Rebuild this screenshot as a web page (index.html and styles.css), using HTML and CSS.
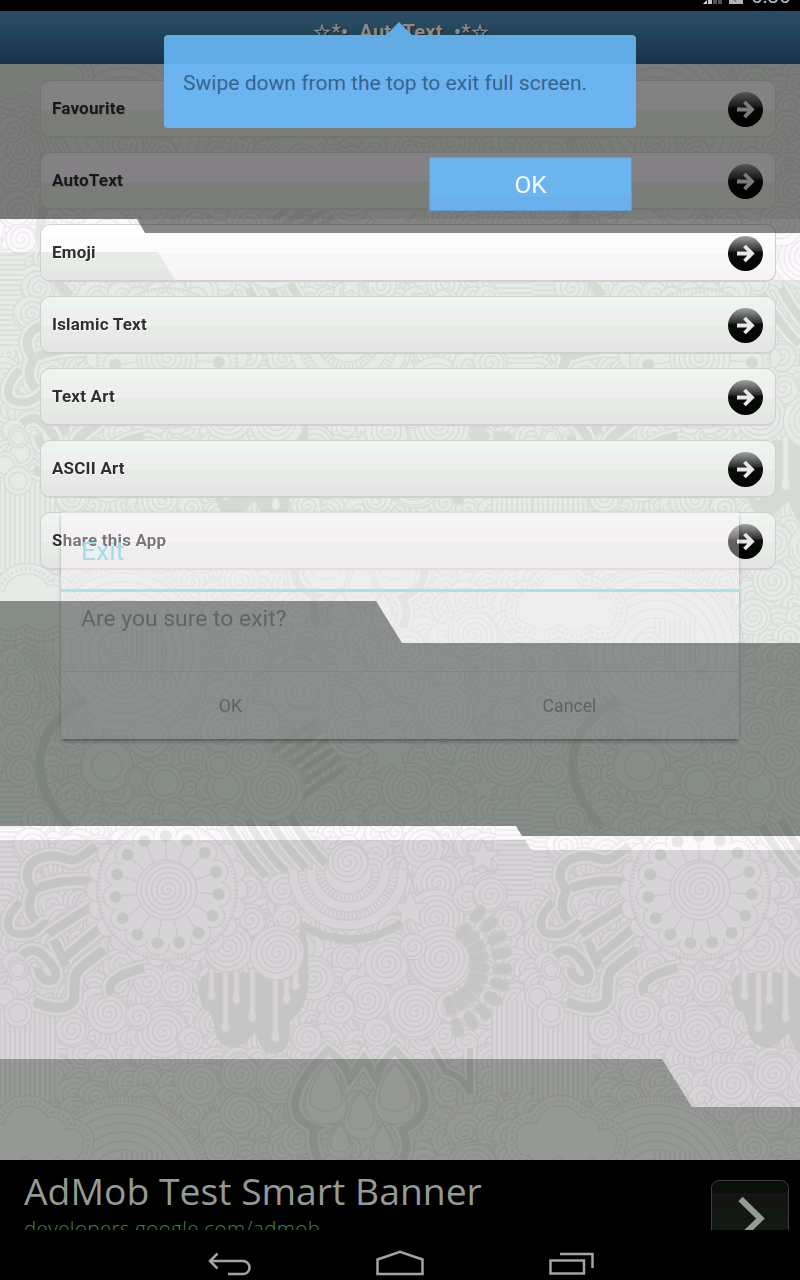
FILE: index.html
```
<!DOCTYPE html>
<html lang="en">
<head>
<meta charset="utf-8">
<title>AutoText</title>
<link rel="stylesheet" href="styles.css">
</head>
<body>
<div class="screen">
  <svg class="wallpaper" viewBox="0 0 800 1280" aria-hidden="true">
    <rect class="tone-mint" width="800" height="1280"/>
    <path class="tone-flash" d="M0 219H800V280H175L158 252H0Z"/>
    <path class="tone-flash" d="M0 826H516L522 836H800V850H531L525 840H0Z"/>
    <path class="tone-lilac" d="M0 840H525L531 850H800V1107H692L662 1059H0Z"/>
    <path class="tone-ash" d="M0 1059H662L692 1107H800V1160H0Z"/>
    <g class="doodles" id="doodles"></g>
  </svg>

  <div class="statusbar">
    <svg class="signal" viewBox="0 0 20 11"><path d="M1 4L5 0V4Z" fill="#ddd"/><path d="M6 0h4v4H6z" fill="#c8c8c8"/><path d="M11 0h4v4h-4zM16 0h4v4h-4z" fill="#555"/></svg>
    <svg class="battery" viewBox="0 0 14 11"><path d="M0 0h14v4H0z" fill="#b5b5b5"/><path d="M5 0l2 1.5" stroke="#555"/></svg>
    <span class="clock">6:36</span>
  </div>
  <header class="titlebar">☆*•. AutoText .•*☆</header>

  <main class="menu">
    <div class="row row-shaded"><span>Favourite</span><svg class="go"><use href="#go"/></svg></div>
    <div class="row row-shaded"><span>AutoText</span><svg class="go"><use href="#go"/></svg></div>
    <div class="row row-flash"><span>Emoji</span><svg class="go"><use href="#go"/></svg></div>
    <div class="row"><span>Islamic Text</span><svg class="go"><use href="#go"/></svg></div>
    <div class="row"><span>Text Art</span><svg class="go"><use href="#go"/></svg></div>
    <div class="row"><span>ASCII Art</span><svg class="go"><use href="#go"/></svg></div>
    <div class="row"><span>Share this App</span><svg class="go"><use href="#go"/></svg></div>
  </main>

  <footer class="bottom">
    <div class="ad">
      <div class="ad-copy"><div class="ad-title">AdMob Test Smart Banner</div><div class="ad-url">developers.google.com/admob</div></div>
      <div class="ad-button"><svg viewBox="0 0 78 60"><path d="M29.500 19L49.500 38.500L29.500 58" fill="none" stroke="#949a94" stroke-width="6"/></svg></div>
    </div>
    <nav class="navbar">
      <svg viewBox="0 0 44 28"><path d="M9.500 3.500L2 11l7.500 7.500M2.500 11H35a6.500 6.500 0 0 1 0 13H20" /></svg>
      <svg class="home" viewBox="0 0 48 28"><path d="M1.500 9.500L24 1.800L46.500 9.500V24H1.500Z"/></svg>
      <svg class="recent" viewBox="0 0 46 28"><path d="M1.500 10.500H35V23.500H1.500ZM11 4H43.500V18"/></svg>
    </nav>
  </footer>

  <section class="dialog">
    <h2>Exit</h2>
    <p>Are you sure to exit?</p>
    <div class="dialog-actions"><span>OK</span><span>Cancel</span></div>
  </section>

  <svg class="shade" viewBox="0 0 800 1280" aria-hidden="true">
    <path fill-opacity=".47" d="M0 64H800V233H145L137 219H0Z"/>
    <path fill="#000a02" fill-opacity=".415" d="M0 601H376L402 643H800V836H522L516 826H0Z"/>
  </svg>

  <div class="hint">Swipe down from the top to exit full screen.</div>
  <div class="hint-ok">OK</div>
</div>

<svg class="defs" aria-hidden="true">
  <defs>
    <linearGradient id="gloss" x1="0" y1="0" x2="0" y2="1">
      <stop offset="0" stop-color="#a2a4a2"/><stop offset=".42" stop-color="#2b2e2b"/><stop offset=".46" stop-color="#0b0e0b"/><stop offset="1" stop-color="#000"/>
    </linearGradient>
    <symbol id="go" viewBox="0 0 35 35">
      <circle cx="17.500" cy="17.500" r="17.500" fill="url(#gloss)"/>
      <path d="M9 17.500H23M16.500 10L24 17.500L16.500 25" fill="none" stroke="#e8e8e8" stroke-width="3.800"/>
    </symbol>
  </defs>
</svg>
<script src="doodles.js"></script>
</body>
</html>
```
FILE: styles.css
```
* { box-sizing: border-box; }
body { margin: 0; background: #000; font-family: Roboto, "Liberation Sans", sans-serif; }
.screen { position: relative; width: 800px; height: 1280px; overflow: hidden; display: flex; flex-direction: column; isolation: isolate; }
.defs { position: absolute; width: 0; height: 0; }
.wallpaper, .shade { position: absolute; inset: 0; width: 800px; height: 1280px; }
.wallpaper { z-index: -1; }
.doodles { mix-blend-mode: multiply; }
.tone-mint { fill: #e7ebe7; }
.tone-flash { fill: #fbf9fb; }
.tone-lilac { fill: #d7d4d7; }
.tone-ash { fill: #959894; }

.statusbar { height: 11px; background: #000; overflow: hidden; display: flex; justify-content: flex-end; padding-right: 8px; }
.signal { width: 20px; height: 11px; margin-right: 7px; }
.battery { width: 14px; height: 11px; margin-right: 8px; }
.clock { color: #bdbdbd; font-size: 20.5px; line-height: 20px; margin-top: -14px; width: 41px; }
.titlebar { height: 53px; padding-top: 9px; text-align: center; font-size: 20px; letter-spacing: .22px; line-height: 24px; font-weight: 700; color: #8c898c; text-shadow: 1px 1px 1px #222; background: linear-gradient(#294b68, #29495f 25%, #1d4558 40%, #213c57 65%, #18364e 90%, #143249); padding-left: 2px; }

.menu { flex: 1; display: flex; flex-direction: column; gap: 14px; padding: 16px 24px 0 40px; }
.row { height: 58px; flex: none; display: flex; align-items: center; justify-content: space-between; padding: 0 12px 1px 11px; border: 1px solid #ced2cd; border-bottom: 2px solid #ced1cd; border-radius: 10px; font-size: 17px; letter-spacing: .2px; font-weight: 700; color: #2f2f2f; text-shadow: 1px 1px 1px #fff; background: linear-gradient(#eef4ef 24%, #efefef 24% 52%, #e6ebe6 52% 80%, #e6e6e6 80%); }
.row-shaded { text-shadow: 1px 1px 1px #ccc; border-color: #d8dbd6; background: linear-gradient(#f9f4f9 52%, #e8ede4 52%); }
.row-flash { position: relative; background: linear-gradient(#fff 24%, #fefbff 24% 50%, #f7f7f7 50% 80%, #f7f3f7 80%); }
.row-flash::before { content: ""; position: absolute; left: 0; top: 27px; width: 134px; height: 28px; border-radius: 0 0 0 9px; background: linear-gradient(#e6ebe6 65%, #e6e6e6 65%); clip-path: polygon(0 0, 117px 0, 134px 100%, 0 100%); }
.row span { position: relative; }
.go { width: 35px; height: 35px; position: relative; top: 1px; }

.bottom { height: 120px; background: #000; }
.ad { height: 70px; overflow: hidden; display: flex; justify-content: space-between; padding: 0 11px 0 24px; }
.ad-copy { font-family: "Open Sans", "Noto Sans", sans-serif; white-space: nowrap; }
.ad-title { font-size: 37.3px; line-height: 50px; padding-top: 6px; color: #949a94; }
.ad-url { font-size: 20.5px; letter-spacing: .42px; line-height: 24px; font-weight: 300; color: #3f8743; }
.ad-button { width: 78px; height: 80px; margin-top: 20px; border: 1px solid #3a3d3a; border-radius: 8px; background: linear-gradient(#081008 16%, #131413 16% 27%, #101810 40%, #181c18); }
.ad-button svg { display: block; width: 78px; height: 60px; margin: -1px; }
.navbar { height: 50px; display: flex; padding: 20px 0 0 208px; }
.navbar svg { width: 44px; height: 28px; fill: none; stroke: #a3a3a3; stroke-width: 2.500; }
.navbar .home { width: 48px; margin-left: 124px; }
.navbar .recent { width: 46px; margin-left: 125px; }

.dialog { position: absolute; left: 61px; top: 512px; width: 678px; height: 227px; background: linear-gradient(rgba(255, 246, 255, .36) 58px, rgba(250, 243, 250, .42) 58px); box-shadow: 0 3px 4px -1px rgba(0, 0, 0, .38), 0 0 3px rgba(0, 0, 0, .08); display: flex; flex-direction: column; }
.dialog h2 { flex: none; margin: 0; height: 80px; padding: 22px 20px 0; border-bottom: 3px solid #ade0ee; color: #a4dbea; font-size: 26.5px; line-height: 34px; font-weight: 400; }
.dialog p { flex: none; margin: 0; height: 79px; padding: 13px 20px; color: #a4a8a4; font-size: 22.9px; line-height: 28px; }
.dialog-actions { flex: 1; min-height: 0; display: flex; border-top: 1px solid #dbdddb; color: #a0a4a0; font-size: 17.7px; line-height: 69px; text-align: center; }
.dialog-actions span { flex: 1; }

.hint { position: absolute; left: 164px; top: 35px; width: 472px; height: 93px; padding: 35px 19px; border-radius: 4px; background: linear-gradient(#62ace6 29px, #6bb4ef 29px); color: #36658d; font-size: 21.05px; line-height: 26px; white-space: nowrap; }
.hint::before { content: ""; position: absolute; left: 222px; top: -13px; border: solid transparent; border-width: 0 13px 13px; border-bottom-color: #62ace6; }
.hint-ok { position: absolute; left: 429px; top: 157px; width: 203px; height: 54px; border: 1px solid #5f9fd0; border-radius: 2px; background: linear-gradient(#6bb5ef 75%, #6bb0ed 75%); color: #f7f7ff; font-size: 24.5px; line-height: 54px; text-align: center; }
```
FILE: doodles.js
```
// Builds one 533 x 532 tile of line doodles and repeats it over the wallpaper.
const LINE = '#f1f0f1', DARK = '#ebedeb', PAPER = '#ffffff';
let seed = 11;
const rnd = () => (seed = (seed * 16807) % 2147483647) / 2147483647;

function spiral(x, y, r) {
  let d = `M${x} ${y}`, rad = 1.8, dir = 1, px = x;
  while (rad < r - 2) {
    px += dir * rad * 2;
    d += `A${rad} ${rad} 0 0 1 ${px.toFixed(1)} ${y}`;
    dir = -dir;
    rad += 2.6;
  }
  return `<circle cx="${x}" cy="${y}" r="${r}" fill="${PAPER}"/><path d="${d}"/>`;
}
const ring = (x, y, r, fill = PAPER) => `<circle cx="${x}" cy="${y}" r="${r}" fill="${fill}"/>`;
const dashed = (x, y, r) => `<circle cx="${x}" cy="${y}" r="${r}" stroke-width="5" stroke-dasharray="1.5 2.5"/>`;
function star(x, y, r) {
  let p = '';
  for (let i = 0; i < 10; i++) {
    const a = i * Math.PI / 5 - Math.PI / 2, q = i % 2 ? r * .45 : r;
    p += `${(x + q * Math.cos(a)).toFixed(1)},${(y + q * Math.sin(a)).toFixed(1)} `;
  }
  return `<polygon points="${p}" fill="${PAPER}"/>`;
}
function ruled(x, y, w, h, vertical) {
  let d = '';
  for (let i = 0; i < (vertical ? w : h); i += 5) d += vertical ? `M${x + i} ${y}v${h}` : `M${x} ${y + i}h${w}`;
  return `<rect x="${x}" y="${y}" width="${w}" height="${h}" fill="${PAPER}" stroke="none"/><path d="${d}"/>`;
}
// A dark ribbon with a thin outline at some distance.
const ribbon = (d, w = 8) => `<path d="${d}" stroke-width="${w + 9}"/><path d="${d}" stroke="${PAPER}" stroke-width="${w + 6}"/><path d="${d}" stroke="${DARK}" stroke-width="${w}"/>`;

let base = '';
for (let y = 560; y < 1092; y += 19)
  for (let x = 0; x < 533; x += 23)
    base += spiral(Math.round(x + rnd() * 14), Math.round(y + rnd() * 12), 11 + rnd() * 9);

let art = ruled(0, 782, 24, 100) + ruled(497, 810, 36, 90) + ruled(0, 1010, 58, 90, true) + ruled(492, 1000, 41, 92, true);

// rainbow and cloud
for (let r = 88; r > 22; r -= 9) art += ring(123, 652, r);
art += dashed(123, 652, 84) + ruled(122, 620, 42, 55, true);
const cloud = 'M-16 606C-18 594-6 588 4 592C8 570 40 568 48 586C56 582 68 590 66 598C78 594 88 606 82 616C82 630 66 632 58 625C48 634 34 632 26 624C16 634 2 632-4 624C-14 624-20 614-16 606Z';
art += `<path fill="${PAPER}" stroke-width="22" d="${cloud}"/><path fill="${PAPER}" stroke="${PAPER}" stroke-width="19" d="${cloud}"/><path stroke-dasharray="1.5 2.5" stroke-width="13" d="${cloud}"/><path fill="${PAPER}" stroke="${PAPER}" stroke-width="6" d="${cloud}"/><path d="${cloud}"/>`;

// striped hair and ribbed fan
for (let i = 0; i < 7; i++) art += `<path d="M${22 + i * 5} 650q${30 - i * 3} 26 ${12 + i * 5} 70"/>`;
art += `<path stroke="${DARK}" stroke-width="9" d="M86 700C35 722 22 780 70 828"/>`;
for (let i = 0; i < 11; i++) {
  const a = 1.7 + i * .29;
  art += `<path d="M${(107 + 26 * Math.cos(a)).toFixed(1)} ${(766 + 26 * Math.sin(a)).toFixed(1)}L${(107 + 57 * Math.cos(a)).toFixed(1)} ${(766 + 57 * Math.sin(a)).toFixed(1)}"/>`;
}
art += dashed(300, 690, 47) + dashed(300, 690, 42);
art += ring(300, 690, 31) + dashed(300, 690, 25);

// coarse diagonal stripes
for (let i = 0; i < 6; i++) art += `<path stroke="${DARK}" stroke-width="6" d="M${272 + i * 6} ${752 + i * 9}l44 -31"/>`;
for (let i = 0; i < 4; i++) art += ribbon(`M${228 + i * 20} ${824 - i * 4}q16 30 38 52`, 8);

const spirals = [[348,862,20],[248,888,15],[283,890,17],[250,920,16],[287,918,14],[228,947,25],[277,953,26],[175,988,18],[148,983,14],[108,1013,21],[163,1032,26],[72,1030,17],[138,1017,13],[313,978,22],[367,1000,24],[340,1008,15],[387,963,22],[377,1032,14],[307,1038,15],[190,1040,13],[423,847,21],[437,883,24],[435,918,29],[440,958,33],[467,898,14],[490,895,17],[508,922,15],[413,947,13],[415,1012,28],[452,1007,16],[123,677,21],[162,685,15],[115,645,13],[302,693,17],[223,730,22],[260,722,20],[353,733,26],[347,702,15],[377,720,14],[410,684,24],[451,675,19],[424,661,18],[406,648,20],[473,635,25],[444,713,29],[408,789,26],[444,796,16],[272,789,32],[248,756,22],[508,756,30],[17,742,19],[14,706,18],[21,682,14],[21,771,15],[38,820,17],[72,852,18],[12,661,13],[382,818,14],[31,846,18],[199,1084,21],[240,1074,20],[280,1080,24],[240,1113,20],[220,1149,18],[298,1140,16]];
for (const s of spirals) art += spiral(...s);
for (const [x, y, r, o] of [[107,766,15,26],[148,737,15,21],[165,783,13,18],[226,787,13,19],[174,813,11,15],[219,765,8,13],[224,815,8,12],[136,778,8,11],[201,823,12,17],[20,985,10,14],[18,970,7,10],[5,997,9,13],[18,1013,9,14]])
  art += ring(x, y, o) + ring(x, y, r);

art += star(345, 663, 18) + star(390, 752, 28) + star(483, 707, 15) + star(484, 788, 16) + star(351, 815, 15) + star(483, 857, 18) + star(410, 910, 20);
art += `<path d="M470 783l-34-18M466 794l-30-14M474 850l-34-34M466 862l-36-36M402 894l-10-50M416 894l-16-50"/>`;

// layered half rings
for (const r of [60, 50, 42, 32, 24]) art += `<path fill="${PAPER}" d="M${348 - r} 870a${r} ${r} 0 0 0 ${2 * r} 0"/>`;
art += `<path stroke-dasharray="1.5 2.500" stroke-width="6" d="M302 870a46 46 0 0 0 92 0M320 870a28 28 0 0 0 56 0"/>`;
art += spiral(348, 862, 20);
art += `<path stroke="${DARK}" stroke-width="8" d="M302 925q48 30 100-2"/>`;

// fan of drops
for (let i = 0; i < 10; i++) {
  const a = -0.9 + i * .24, c = Math.cos(a), s = Math.sin(a);
  for (const q of [38, 61]) {
    const d = `M${(437 + q * c).toFixed(1)} ${(965 + q * s).toFixed(1)}l${(9 * c).toFixed(1)} ${(9 * s).toFixed(1)}`;
    art += `<path stroke-width="12" stroke-linecap="round" d="${d}"/><path stroke="${DARK}" stroke-width="9" stroke-linecap="round" d="${d}"/>`;
  }
}

// tangled ribbons beside the flower
art += ribbon('M96 846C66 870 74 856 50 856C22 860 24 880 34 890C22 912 36 926 48 924', 9);
art += ribbon('M20 902C2 920 6 934 20 934C34 936 40 926 46 922', 8);
art += ribbon('M94 882Q66 878 38 888M92 906L48 934', 9);
art += ribbon('M104 950C70 976 76 968 74 1000C66 1012 50 1008 34 1002', 10);
art += ribbon('M22 956C34 944 42 952 54 968C62 984 40 986 38 968M64 958L100 928M54 940L66 966', 9);
art += ribbon('M144 968C118 974 104 984 112 994', 9);

// dripping paint
art += `<path fill="${DARK}" stroke="none" d="M202 976c20-8 54 0 78-6c8-8 22-30 20-52q10 12 8 70c-2 20-10 24-18 34c0 24-4 32-16 32c-14 0-14-14-20-22c-8 14-20 18-26 14c-14-2-12-20-18-34c-10 0-14-22-8-36z"/>`;
for (const [x, h] of [[211, 38], [225, 70], [236, 42], [252, 60], [275, 80], [286, 42], [295, 28]])
  art += `<path fill="${PAPER}" d="M${x - 2.5} 968v${h - 16}c-6 14 12 14 6 0v${16 - h}z"/>`;
art += spiral(228, 947, 25) + spiral(277, 953, 27);

// flower
for (let i = 0; i < 22; i++) {
  const a = i * Math.PI / 11;
  art += ring((167 + 70 * Math.cos(a)).toFixed(1), (890 + 66 * Math.sin(a)).toFixed(1), 11);
}
art += ring(167, 890, 70) + dashed(167, 890, 69);
for (let i = 0; i < 15; i++) {
  const a = i * Math.PI * 2 / 15 + .08, c = Math.cos(a), s = Math.sin(a);
  art += ring((167 + 52 * c).toFixed(1), (890 + 54 * s).toFixed(1), 12);
}
art += `<circle cx="167" cy="890" r="54" fill="${PAPER}" stroke="none"/>`;
for (let i = 0; i < 15; i++) {
  const a = i * Math.PI * 2 / 15 + .08, c = Math.cos(a), s = Math.sin(a);
  art += `<path d="M${167 + 30 * c} ${890 + 30 * s}L${167 + 50 * c} ${890 + 52 * s}"/><circle cx="${167 + 52 * c}" cy="${890 + 54 * s}" r="6" fill="${DARK}" stroke="none"/>`;
}
art += spiral(167, 890, 30);

// twin leaf crown
art += ribbon('M318 1160C312 1146 312 1130 316 1128C282 1118 292 1086 328 1050C340 1058 348 1070 350 1078L364 1058L376 1078C380 1066 388 1056 395 1050C430 1084 436 1116 402 1130C408 1140 408 1150 402 1160', 8);
for (const [x, y, k] of [[326, 1068, 1], [395, 1068, 1], [361, 1096, .8], [340, 1128, .6], [383, 1130, .6]])
  for (const q of [1.3, 1]) art += `<path fill="${PAPER}" d="M${x} ${y - 5 * q}c${-26 * k * q} ${36 * k} ${-16 * k * q} ${48 * k * q} 0 ${48 * k * q}s${26 * k * q} ${-12 * k} 0 ${-48 * k * q}z"/>`;
art += ribbon('M432 1048L446 1072Q464 1076 470 1094V1048', 6);

const place = id => [-1064, -532, 0, 532].map(y => [-533, 0, 533].map(x => `<use href="#${id}" x="${x}" y="${y}"/>`).join('')).join('');
document.getElementById('doodles').innerHTML =
  `<defs><g id="doodle-base">${base}</g><g id="doodle-art">${art}</g></defs><g fill="none" stroke="${LINE}" stroke-width="1.5">${place('doodle-base')}${place('doodle-art')}</g>`;
```
